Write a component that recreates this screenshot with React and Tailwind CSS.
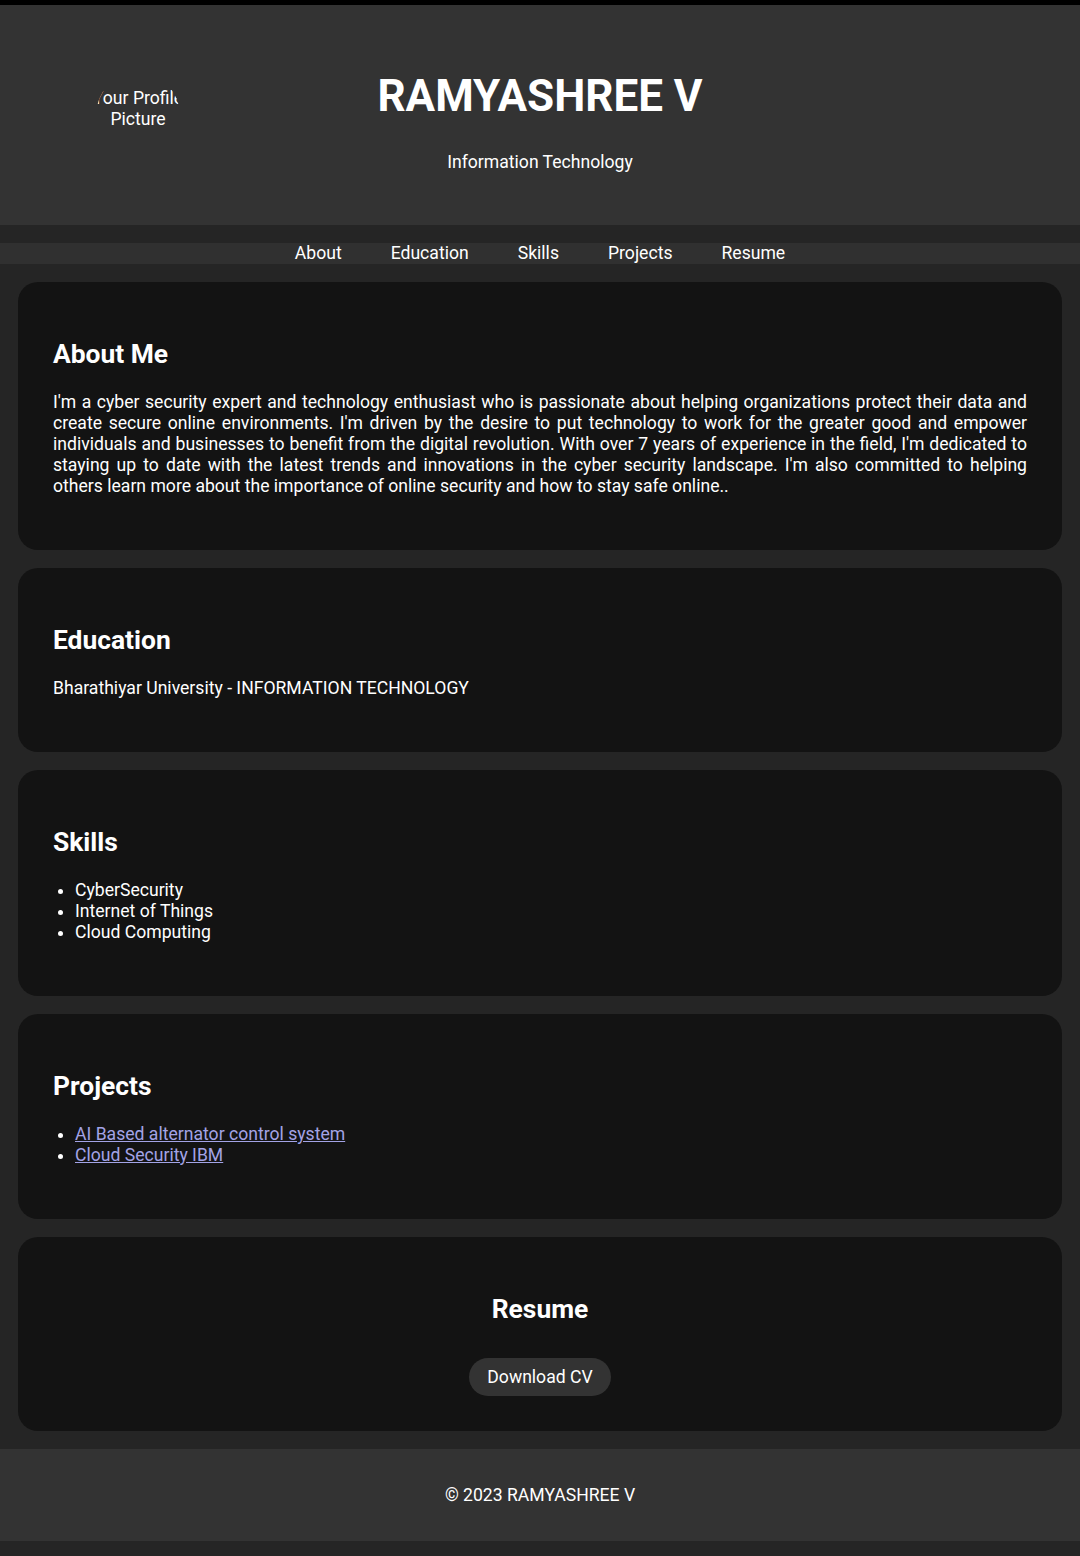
export default function App() {
  const skills = ["CyberSecurity", "Internet of Things", "Cloud Computing"];
  const projects = ["AI Based alternator control system", "Cloud Security IBM"];
  const navItems = ["About", "Education", "Skills", "Projects", "Resume"];
  return (
    <div className="min-h-screen bg-[#252525] font-['Roboto',sans-serif] text-[17.6px] leading-[21px] text-white">
      <div className="h-[5px] bg-black" />
      <header className="grid h-[220px] grid-cols-[1fr_auto_1fr] bg-[#333333]">
        <div className="pt-[68px] pl-[96px]">
          <div className="flex h-[84px] w-[84px] items-center justify-center overflow-hidden rounded-full">
            <div className="-mt-[12px] whitespace-nowrap text-center leading-[21px]">
              Your Profile
              <br />
              Picture
            </div>
          </div>
        </div>
        <div className="flex flex-col items-center pt-[65px]">
          <h1 className="text-[44px] leading-[normal] font-bold">RAMYASHREE V</h1>
          <p className="mt-[30px]">Information Technology</p>
        </div>
        <div />
      </header>
      <nav className="py-[18px]">
        <ul className="flex justify-center gap-[49px] bg-[#303030]">
          {navItems.map((n) => (
            <li key={n}>
              <a href="#" className="text-white no-underline">
                {n}
              </a>
            </li>
          ))}
        </ul>
      </nav>
      <main className="flex flex-col gap-[18px] px-[18px] pb-[18px]">
        <section className="rounded-[20px] bg-[#131313] p-[35px]">
          <h2 className="my-[22px] text-[26.4px] leading-[31px] font-bold">About Me</h2>
          <p className="my-[18px] text-justify">
            I'm a cyber security expert and technology enthusiast who is passionate about helping organizations protect their data and create secure online environments. I'm driven by the desire to put technology to work for the greater good and empower individuals and businesses to benefit from the digital revolution. With over 7 years of experience in the field, I'm dedicated to staying up to date with the latest trends and innovations in the cyber security landscape. I'm also committed to helping others learn more about the importance of online security and how to stay safe online..
          </p>
        </section>
        <section className="rounded-[20px] bg-[#131313] p-[35px]">
          <h2 className="my-[22px] text-[26.4px] leading-[31px] font-bold">Education</h2>
          <p className="my-[18px]">Bharathiyar University - INFORMATION TECHNOLOGY</p>
        </section>
        <section className="rounded-[20px] bg-[#131313] p-[35px]">
          <h2 className="my-[22px] text-[26.4px] leading-[31px] font-bold">Skills</h2>
          <ul className="my-[18px] list-disc pl-[22px]">
            {skills.map((s) => (
              <li key={s}>{s}</li>
            ))}
          </ul>
        </section>
        <section className="rounded-[20px] bg-[#131313] p-[35px]">
          <h2 className="my-[22px] text-[26.4px] leading-[31px] font-bold">Projects</h2>
          <ul className="my-[18px] list-disc pl-[22px]">
            {projects.map((p) => (
              <li key={p}>
                <a href="#" className="text-[#a3a3e6] underline">
                  {p}
                </a>
              </li>
            ))}
          </ul>
        </section>
        <section className="flex flex-col items-center rounded-[20px] bg-[#131313] p-[35px]">
          <h2 className="mt-[22px] mb-[33px] text-[26.4px] leading-[31px] font-bold">Resume</h2>
          <a href="#" className="flex h-[38px] items-center rounded-full bg-[#333333] px-[18px] text-white no-underline">
            Download CV
          </a>
        </section>
      </main>
      <footer className="flex h-[92px] items-center justify-center bg-[#333333]">
        <p>© 2023 RAMYASHREE V</p>
      </footer>
      <div className="h-[16px]" />
    </div>
  );
}
